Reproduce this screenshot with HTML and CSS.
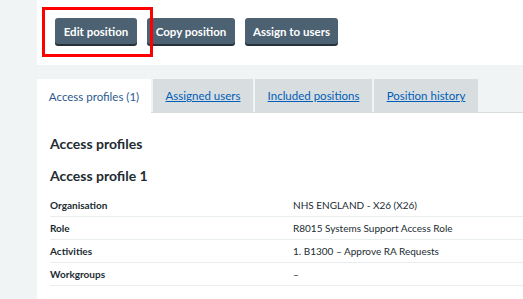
FILE: index.html
```html
<!DOCTYPE html>
<html lang="en">
<head>
    <meta charset="UTF-8">
    <title>Position</title>
    <link rel="stylesheet" href="styles.css">
</head>
<body>
    <div class="page">
        <!-- actions -->
        <div class="actions">
            <div class="highlight">
                <button class="btn btn-edit">Edit position</button>
            </div>
            <button class="btn btn-copy">Copy position</button>
            <button class="btn btn-assign">Assign to users</button>
        </div>

        <!-- tabs -->
        <ul class="tabs">
            <li class="tab tab-active"><span>Access profiles (1)</span></li>
            <li class="tab"><a href="#">Assigned users</a></li>
            <li class="tab"><a href="#">Included positions</a></li>
            <li class="tab"><a href="#">Position history</a></li>
        </ul>

        <div class="panel">
            <h2 class="title">Access profiles</h2>
            <h3 class="subtitle">Access profile 1</h3>
            <dl class="summary">
                <div class="row"><dt>Organisation</dt><dd>NHS ENGLAND - X26 (X26)</dd></div>
                <div class="row"><dt>Role</dt><dd>R8015 Systems Support Access Role</dd></div>
                <div class="row"><dt>Activities</dt><dd>1. B1300 – Approve RA Requests</dd></div>
                <div class="row"><dt>Workgroups</dt><dd>–</dd></div>
            </dl>
        </div>
    </div>
</body>
</html>
```

FILE: styles.css
```css
* {
    margin: 0;
    padding: 0;
    box-sizing: border-box;
}

body {
    background: #f0f4f5;
    font-family: 'Lato', 'Noto Sans', sans-serif;
    color: #212b32;
    overflow: hidden;
}

.page {
    margin-left: 37px;
}

/* action buttons */
.actions {
    background: #fff;
    height: 65px;
    display: flex;
    align-items: flex-start;
    gap: 10px;
    padding: 18px 0 0 18px;
}

.highlight {
    position: relative;
}

.highlight::after {
    content: "";
    position: absolute;
    left: -13px;
    top: -11px;
    width: 111px;
    height: 50px;
    border: 3px solid #ff0000;
    box-sizing: border-box;
}

.btn {
    display: block;
    height: 26px;
    border: none;
    border-radius: 3px;
    background: #4c6272;
    box-shadow: 0 2px 0 #263139;
    color: #fff;
    font-family: inherit;
    font-size: 11.5px;
    font-weight: 700;
    line-height: 25px;
    white-space: nowrap;
    text-align: center;
}

.btn-edit { width: 82px; }
.btn-copy { width: 88px; }
.btn-assign { width: 93px; }

/* tabs */
.tabs {
    list-style: none;
    display: flex;
    gap: 2px;
    margin-top: 14px;
    height: 34px;
    border-bottom: 1px solid #d8dde0;
}

.tab {
    background: #d8dde0;
    font-size: 11.5px;
    display: flex;
    align-items: center;
    justify-content: center;
    height: 33px;
    white-space: nowrap;
}

.tab a {
    color: #005eb8;
    text-decoration: underline;
}

.tab-active {
    background: #fff;
    width: 114px;
    height: 34px;
    margin-bottom: -1px;
    color: #2a5b8f;
}

.tab:nth-child(2) { width: 100px; }
.tab:nth-child(3) { width: 117px; }
.tab:nth-child(4) { width: 104px; }

/* content */
.panel {
    background: #fff;
    padding: 21px 0 14px 13px;
    height: 186px;
}

.title {
    font-size: 14px;
    font-weight: 700;
    line-height: 20px;
}

.subtitle {
    font-size: 14px;
    font-weight: 700;
    line-height: 20px;
    margin-top: 12px;
}

.summary {
    margin-top: 8px;
}

.row {
    display: flex;
    height: 23px;
    align-items: center;
    border-bottom: 1px solid #e8edee;
    font-size: 10px;
}

.row dt {
    width: 243px;
    font-weight: 700;
}
```
